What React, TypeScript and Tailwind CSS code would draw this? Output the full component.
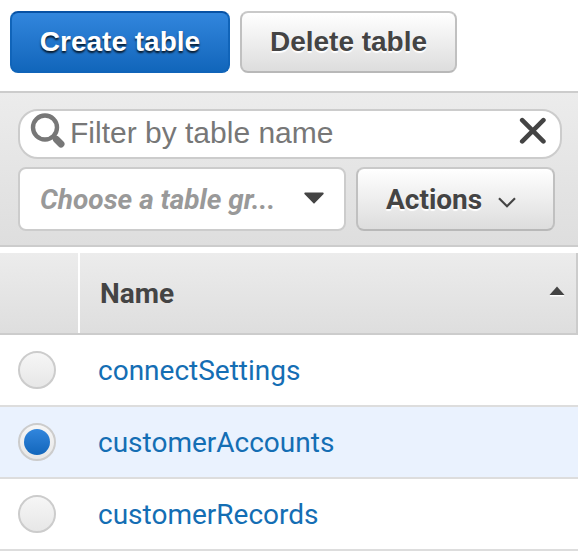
const tables = [
  { name: 'connectSettings', selected: false },
  { name: 'customerAccounts', selected: true },
  { name: 'customerRecords', selected: false },
];

const grayButton =
  'border-2 border-[#c9c9c9] border-b-[#b8b8b8] border-x-[#c0c0c0] rounded-lg bg-linear-to-b from-white to-[#dddddd] text-[#444444] font-bold text-[28px] leading-8 [text-shadow:0_2px_1px_#ffffff]';

function SearchIcon() {
  return (
    <svg className="w-9 h-9 mt-0.5 ml-0.5 shrink-0" viewBox="0 0 36 36" fill="none" stroke="#777777">
      <circle cx="15" cy="14.5" r="12" strokeWidth="4.4" />
      <path d="M23 23 L27 27" strokeWidth="5" />
      <path d="M26.5 26.5 L31 31" strokeWidth="7" strokeLinecap="round" />
    </svg>
  );
}

function Toolbar() {
  return (
    <div className="flex gap-2.5 pt-[11px] pl-2.5 h-[91px] font-['Liberation_Sans',sans-serif]">
      <button className="w-[220px] h-[62px] rounded-lg border-2 border-[#1064b9] border-t-[#0751a4] bg-linear-to-b from-[#3186dd] to-[#1166bb] text-white font-bold text-[28px] leading-8 [text-shadow:0_2px_2px_#000000cc]">
        Create table
      </button>
      <button className={`w-[217px] h-[62px] ${grayButton}`}>Delete table</button>
    </div>
  );
}

function Filters() {
  return (
    <div className="h-[156px] border-y-2 border-[#cccccc] bg-linear-to-b from-[#ececec] to-[#dedede] pt-4 pl-[18px]">
      <div className="flex w-[544px] h-[50px] border-2 border-[#cccccc] rounded-[20px] bg-white pl-2">
        <SearchIcon />
        <input
          className="ml-1 w-[440px] h-[44px] p-0 outline-none bg-transparent text-[30px] leading-[44px] font-['Liberation_Sans',sans-serif] placeholder:text-[#777777] placeholder:opacity-100"
          placeholder="Filter by table name"
        />
        <svg className="w-7 h-7 mt-[6px] ml-[9px] shrink-0" viewBox="0 0 28 28" stroke="#444444" strokeWidth="4.6" strokeLinecap="round">
          <path d="M3.2 3.2 L24.4 24.4 M24.4 3.2 L3.2 24.4" />
        </svg>
      </div>
      <div className="flex gap-2.5 mt-2 font-[Roboto,sans-serif]">
        <div className="flex items-center w-[328px] h-[64px] border-2 border-[#cccccc] rounded-lg bg-white pl-5">
          <span className="mt-0.5 w-[264px] text-[28px] leading-8 font-bold italic text-[#999999] whitespace-nowrap">Choose a table gr...</span>
          <svg className="w-5 h-3 -mt-0.5 shrink-0" viewBox="0 0 20 12" fill="#444444">
            <path d="M1 0.5 H19 Q20 0.5 19.6 2 L10.8 11 Q10 12 9.2 11 L0.4 2 Q0 0.5 1 0.5Z" />
          </svg>
        </div>
        <button className={`flex items-center w-[199px] h-[64px] pl-7 pt-0.5 ${grayButton}`}>
          Actions
          <svg className="w-[18px] h-[11px] ml-4 mt-1" viewBox="0 0 18 11" fill="none" stroke="#444444" strokeWidth="2.2">
            <path d="M1 1.2 L9 9.2 L17 1.2" />
          </svg>
        </button>
      </div>
    </div>
  );
}

export default function App() {
  return (
    <main className="w-[586px] h-[559px] bg-white overflow-hidden">
      <div className="w-[578px]">
        <Toolbar />
        <Filters />
        <div className="mt-1.5 font-[Roboto,sans-serif] text-[28px] leading-8">
          <div className="flex h-[82px] border-b-2 border-r-2 border-[#cccccc] bg-linear-to-b from-[#ececec] to-[#dedede]">
            <div className="w-20 border-r-2 border-white" />
            <div className="flex flex-1 items-center justify-between pl-5 pr-[11px] font-bold text-[#444444]">
              <span className="mt-0.5">Name</span>
              <svg className="w-4 h-[11px] -mt-1" viewBox="0 0 16 11">
                <path d="M1 9 H15 V10.5 H1Z" fill="#ffffff" />
                <path d="M8 0.5 L15.5 9 H0.5Z" fill="#444444" />
              </svg>
            </div>
          </div>
          {tables.map((table) => (
            <div
              key={table.name}
              className={`flex items-center h-[72px] pl-[18px] border-b-2 border-[#dddddd] ${table.selected ? 'bg-[#eaf2fe]' : 'bg-white'}`}
            >
              <span className="flex items-center justify-center size-[38px] rounded-full border-2 border-[#cccccc] bg-linear-to-b from-[#f6f6f6] to-[#e7e7e7]">
                {table.selected && <span className="size-[26px] rounded-full bg-linear-to-b from-[#3186dd] to-[#1166bb]" />}
              </span>
              <a className="mt-0.5 ml-[42px] text-[#146eb4]">{table.name}</a>
            </div>
          ))}
        </div>
      </div>
    </main>
  );
}
